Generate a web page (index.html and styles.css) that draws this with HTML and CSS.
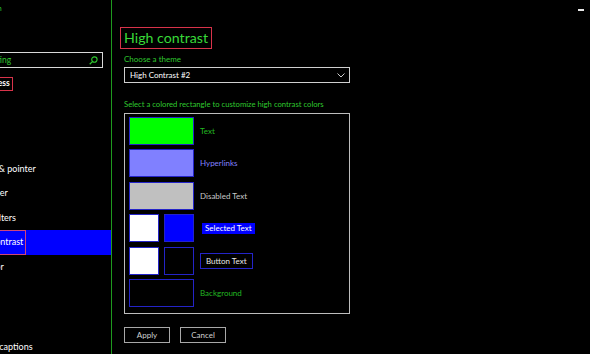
FILE: index.html
```html
<!DOCTYPE html>
<html lang="en">

<head>
    <meta charset="UTF-8">
    <meta name="viewport" content="width=device-width, initial-scale=1.0">
    <title>Settings - High contrast</title>
    <link rel="stylesheet" href="styles.css">
</head>

<body>

    <div class="window">

        <!-- Sidebar, scrolled partly out of view -->
        <div class="sidebar">
            <div class="sidebar-inner">
                <div class="app-title">Navigation</div>

                <div class="search">
                    <span class="search-text">Find a setting</span>
                    <svg class="search-icon" width="9" height="9" viewBox="0 0 10 10">
                        <circle cx="6" cy="4" r="3" fill="none" stroke="#2fc82f" stroke-width="1.2" />
                        <line x1="3.8" y1="6.2" x2="0.8" y2="9.2" stroke="#2fc82f" stroke-width="1.4" />
                    </svg>
                </div>

                <div class="category"><span class="category-label">Ease of Access</span></div>

                <div class="group-title">Vision</div>
                <ul class="nav">
                    <li>Display</li>
                    <li>Cursor &amp; pointer</li>
                    <li>Magnifier</li>
                    <li>Color filters</li>
                    <li class="active"><span class="active-label">High contrast</span></li>
                    <li>Narrator</li>
                </ul>

                <div class="group-title group-title-last">Hearing</div>
                <ul class="nav">
                    <li>Audio</li>
                    <li>Closed captions</li>
                </ul>
            </div>
        </div>

        <!-- High contrast page -->
        <div class="main">
            <div class="minimize"></div>

            <h1 class="page-title">High contrast</h1>

            <div class="field-label">Choose a theme</div>
            <div class="dropdown">
                <span>High Contrast #2</span>
                <svg width="8" height="5" viewBox="0 0 8 5">
                    <polyline points="0.5,0.5 4,4 7.5,0.5" fill="none" stroke="#ccc" stroke-width="1" />
                </svg>
            </div>

            <div class="hint">Select a colored rectangle to customize high contrast colors</div>

            <div class="color-panel">
                <div class="color-row">
                    <div class="swatch wide green"></div>
                    <span class="label label-text">Text</span>
                </div>
                <div class="color-row">
                    <div class="swatch wide lavender"></div>
                    <span class="label label-link">Hyperlinks</span>
                </div>
                <div class="color-row">
                    <div class="swatch wide grey"></div>
                    <span class="label label-disabled">Disabled Text</span>
                </div>
                <div class="color-row">
                    <div class="swatch small white"></div>
                    <div class="swatch small blue"></div>
                    <span class="label label-selected">Selected Text</span>
                </div>
                <div class="color-row">
                    <div class="swatch small white"></div>
                    <div class="swatch small black"></div>
                    <span class="label label-button">Button Text</span>
                </div>
                <div class="color-row">
                    <div class="swatch wide black"></div>
                    <span class="label label-bg">Background</span>
                </div>
            </div>

            <div class="actions">
                <button class="btn">Apply</button>
                <button class="btn btn-cancel">Cancel</button>
            </div>
        </div>

    </div>

</body>

</html>
```

FILE: styles.css
```css
body,
html {
    margin: 0;
    padding: 0;
    background: #000;
    font-family: 'Lato', 'Noto Sans', sans-serif;
    color: #fff;
    overflow: hidden;
}

.window {
    display: flex;
    height: 354px;
}

/* ---------- sidebar ---------- */

.sidebar {
    width: 111px;
    flex: none;
    border-right: 1px solid #1e9a1e;
    overflow: hidden;
}

.sidebar-inner {
    margin-left: -30px;
    width: 141px;
}

.app-title {
    color: #2fc82f;
    font-size: 7.5px;
    line-height: 10px;
    padding-top: 4px;
    margin-left: -4px;
}

.search {
    display: flex;
    align-items: center;
    justify-content: space-between;
    box-sizing: border-box;
    width: 133px;
    height: 16px;
    margin-top: 38px;
    padding: 0 4px 0 0;
    border: 1.5px solid #d8d8d8;
}

.search-text {
    color: #2fc82f;
    font-size: 8.5px;
    margin-left: -10px;
}

.category {
    display: flex;
    margin-top: 9px;
    height: 14px;
}

.category-label {
    box-sizing: border-box;
    height: 14px;
    line-height: 11px;
    padding: 0 2px;
    margin-left: -18px;
    border: 1.5px solid #d8334a;
    font-size: 8.5px;
    font-weight: bold;
}

.group-title {
    height: 42px;
    margin-left: -8px;
    font-size: 8px;
    font-weight: bold;
    line-height: 60px;
    overflow: hidden;
}

.group-title-last {
    height: 32px;
    line-height: 42px;
}

.nav {
    list-style: none;
    margin: 0;
    padding: 0;
}

.nav li {
    height: 24.2px;
    line-height: 24.2px;
    font-size: 9px;
    white-space: nowrap;
}

.nav li.active {
    background: #0000ff;
    height: 25px;
}

.active-label {
    display: inline-block;
    box-sizing: border-box;
    height: 25px;
    line-height: 22px;
    padding-right: 2px;
    border: 1.5px solid #d0457a;
    border-left: none;
}

/* ---------- main ---------- */

.main {
    flex: 1;
    position: relative;
    padding: 27px 0 0 12px;
}

.minimize {
    position: absolute;
    top: 9px;
    right: 6px;
    width: 6px;
    height: 1.5px;
    background: #e8e8e8;
}

.page-title {
    display: inline-block;
    box-sizing: border-box;
    height: 22px;
    margin: 0 0 0 -4px;
    padding: 0 3px;
    border: 1.5px solid #d8334a;
    color: #38d838;
    font-size: 14.2px;
    font-weight: normal;
    line-height: 19px;
}

.field-label {
    margin-top: 5px;
    color: #2fc82f;
    font-size: 8px;
    line-height: 10px;
}

.dropdown {
    display: flex;
    align-items: center;
    justify-content: space-between;
    box-sizing: border-box;
    width: 226px;
    height: 16px;
    margin-top: 3px;
    padding: 0 4px 0 5px;
    border: 1.5px solid #cfcfcf;
    font-size: 8px;
}

.hint {
    margin-top: 15.5px;
    color: #2fc82f;
    font-size: 7.7px;
    line-height: 10px;
}

.color-panel {
    display: flex;
    flex-direction: column;
    gap: 4.6px;
    box-sizing: border-box;
    width: 226px;
    height: 201px;
    margin-top: 4px;
    padding: 3px 4px;
    border: 1.5px solid #bdbdbd;
}

.color-row {
    display: flex;
    align-items: center;
    gap: 5px;
    height: 28px;
}

.swatch {
    box-sizing: border-box;
    height: 28px;
    border: 1.5px solid #2424c8;
}

.swatch.wide {
    width: 65px;
}

.swatch.small {
    width: 30px;
}

.green { background: #00ff00; }
.lavender { background: #8080ff; }
.grey { background: #c0c0c0; }
.white { background: #fff; }
.blue { background: #0000ff; }
.black { background: #000; }

.label {
    margin-left: 1px;
    font-size: 8px;
    white-space: nowrap;
}

.label-text,
.label-bg {
    color: #22b822;
}

.label-link {
    color: #8080ff;
}

.label-disabled {
    color: #c8c8c8;
}

.label-selected {
    margin-left: 3px;
    padding: 0 3px;
    line-height: 11px;
    background: #0000ff;
    color: #fff;
}

.label-button {
    padding: 2px 5px;
    line-height: 10px;
    border: 1px solid #2424c8;
    color: #e8e8e8;
}

.actions {
    display: flex;
    gap: 10px;
    margin-top: 13px;
}

.btn {
    box-sizing: border-box;
    width: 46px;
    height: 16px;
    padding: 0;
    background: #000;
    border: 1.5px solid #a8a8a8;
    color: #d0d0d0;
    font-family: inherit;
    font-size: 8px;
}
```
